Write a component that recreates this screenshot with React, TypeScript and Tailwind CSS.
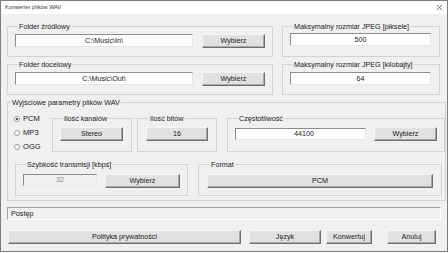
import React from "react";

const font = "font-['Liberation_Sans',Arial,sans-serif]";

const Btn = ({ label, className = "" }: { label: string; className?: string }) => (
  <div
    className={`flex items-center justify-center bg-[#e1e1e1] border border-t-[#f4f4f4] border-l-[#f4f4f4] border-r-[#6e6e6e] border-b-[#6e6e6e] shadow-[inset_-1px_-1px_0_#a8a8a8] text-[7.2px] text-[#1a1a1a] leading-none ${className}`}
  >
    {label}
  </div>
);

const Field = ({
  value,
  className = "",
  disabled = false,
  align = "center",
}: {
  value: string;
  className?: string;
  disabled?: boolean;
  align?: "center" | "left";
}) => (
  <div
    className={`flex items-center border border-t-[#8c8c8c] border-l-[#8c8c8c] border-r-[#e6e6e6] border-b-[#e6e6e6] text-[7.2px] leading-none ${
      align === "center" ? "justify-center" : "justify-start pl-[58px]"
    } ${disabled ? "bg-[#f0f0f0] text-[#8d8d8d]" : "bg-white text-[#1a1a1a]"} ${className}`}
  >
    {value}
  </div>
);

const Group = ({
  title,
  className = "",
  children,
}: {
  title: string;
  className?: string;
  children?: React.ReactNode;
}) => (
  <fieldset className={`border border-[#d2d2d2] ${className}`}>
    <legend className="ml-[3px] px-[1px] text-[7.2px] leading-[9px] text-[#1a1a1a]">{title}</legend>
    {children}
  </fieldset>
);

const Radio = ({ label, checked = false }: { label: string; checked?: boolean }) => (
  <div className="flex items-center h-[14px] gap-[3px]">
    <div className="w-[6px] h-[6px] rounded-full border border-[#9a9a9a] bg-white flex items-center justify-center">
      {checked && <div className="w-[2px] h-[2px] rounded-full bg-[#222]" />}
    </div>
    <span className="text-[7.6px] leading-none text-[#1a1a1a]">{label}</span>
  </div>
);

export default function App() {
  return (
    <div className={`w-[448px] h-[253px] bg-white ${font}`}>
      <div className="w-[448px] h-[252px] border border-[#7d7d7d] bg-[#f0f0f0] flex flex-col">
        {/* title bar */}
        <div className="h-[13px] bg-white flex items-center justify-between pl-[4px] pr-[3px]">
          <span className="text-[5.6px] leading-none text-[#3a3a3a]">Konwerter plików WAV</span>
          <svg width="7" height="7" viewBox="0 0 7 7" className="mr-[1px]">
            <path d="M1 1 L6 6 M6 1 L1 6" stroke="#555" strokeWidth="0.8" />
          </svg>
        </div>

        <div className="flex flex-col pl-[6px] pt-[8px]">
          {/* top two columns */}
          <div className="flex gap-[9px]">
            <div className="flex flex-col gap-[3px] w-[266px]">
              <Group title="Folder źródłowy" className="h-[35px] px-[7px]">
                <div className="flex items-start gap-[9px] mt-[3px]">
                  <Field value="C:\Music\In\" className="w-[178px] h-[13px]" />
                  <Btn label="Wybierz" className="w-[63px] h-[14px]" />
                </div>
              </Group>
              <Group title="Folder docelowy" className="h-[35px] px-[7px]">
                <div className="flex items-start gap-[9px] mt-[3px]">
                  <Field value="C:\Music\Out\" className="w-[178px] h-[13px]" />
                  <Btn label="Wybierz" className="w-[63px] h-[14px]" />
                </div>
              </Group>
            </div>
            <div className="flex flex-col gap-[3px] w-[158px]">
              <Group title="Maksymalny rozmiar JPEG [piksele]" className="h-[35px] px-[7px]">
                <Field value="500" className="w-[141px] h-[13px] mt-[2px]" />
              </Group>
              <Group title="Maksymalny rozmiar JPEG [kilobajty]" className="h-[35px] px-[7px]">
                <Field value="64" className="w-[141px] h-[13px] mt-[3px]" />
              </Group>
            </div>
          </div>

          {/* output parameters */}
          <Group title="Wyjściowe parametry plików WAV" className="w-[434px] h-[103px] mt-[3px]">
            <div className="flex mt-[7px]">
              <div className="w-[44px] flex flex-col pl-[6px]">
                <div className="mt-[-2px]">
                  <Radio label="PCM" checked />
                  <Radio label="MP3" />
                  <Radio label="OGG" />
                </div>
              </div>
              <Group title="Ilość kanałów" className="w-[80px] h-[38px] px-[7px]">
                <Btn label="Stereo" className="w-[63px] h-[14px] mt-[4px]" />
              </Group>
              <Group title="Ilość bitów" className="w-[76px] h-[38px] px-[8px] ml-[5px]">
                <Btn label="16" className="w-[62px] h-[14px] mt-[4px]" />
              </Group>
              <Group title="Częstotliwość" className="w-[215px] h-[38px] px-[7px] ml-[10px]">
                <div className="flex items-start gap-[8px] mt-[5px]">
                  <Field value="44100" align="left" className="w-[131px] h-[12px]" />
                  <Btn label="Wybierz" className="w-[63px] h-[14px] mt-[-1px]" />
                </div>
              </Group>
            </div>
            <div className="flex mt-[6px] pl-[7px] gap-[10px]">
              <Group title="Szybkość transmisji [kbps]" className="w-[173px] h-[36px] px-[7px]">
                <div className="flex items-start gap-[8px] mt-[5px]">
                  <Field value="32" disabled className="w-[74px] h-[12px]" />
                  <Btn label="Wybierz" className="w-[75px] h-[14px]" />
                </div>
              </Group>
              <Group title="Format" className="w-[240px] h-[36px] px-[8px]">
                <Btn label="PCM" className="w-[226px] h-[14px] mt-[5px]" />
              </Group>
            </div>
          </Group>

          {/* progress */}
          <div className="w-[434px] h-[13px] mt-[6px] border border-t-[#a0a0a0] border-l-[#a0a0a0] border-r-white border-b-white flex items-center pl-[3px] text-[7.2px] leading-none text-[#1a1a1a]">
            Postęp
          </div>

          {/* bottom buttons */}
          <div className="flex mt-[10px] pl-[1px]">
            <Btn label="Polityka prywatności" className="w-[233px] h-[14px]" />
            <Btn label="Język" className="w-[72px] h-[14px] ml-[8px]" />
            <Btn label="Konwertuj" className="w-[46px] h-[14px] ml-[5px]" />
            <Btn label="Anuluj" className="w-[49px] h-[14px] ml-[15px]" />
          </div>
        </div>
      </div>
    </div>
  );
}
